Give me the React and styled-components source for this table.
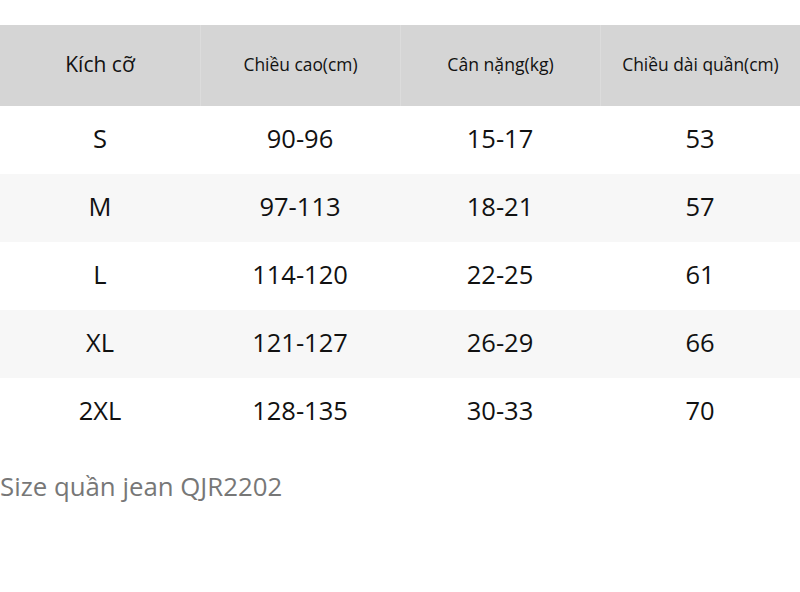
import styled, { createGlobalStyle } from 'styled-components';

const GlobalStyle = createGlobalStyle`
  body {
    margin: 0;
    background: #fff;
    font-family: 'Open Sans', 'Noto Sans', sans-serif;
    color: #111;
  }
`;

const rows = [
  ['S', '90-96', '15-17', '53'],
  ['M', '97-113', '18-21', '57'],
  ['L', '114-120', '22-25', '61'],
  ['XL', '121-127', '26-29', '66'],
  ['2XL', '128-135', '30-33', '70'],
];

const headers = [
  { label: 'Kích cỡ', size: 21 },
  { label: 'Chiều cao(cm)', size: 17.4 },
  { label: 'Cân nặng(kg)', size: 17.6 },
  { label: 'Chiều dài quần(cm)', size: 17.4 },
];

const Page = styled.div`
  padding-top: 25px;
  width: 800px;
`;

const Table = styled.div`
  display: grid;
  grid-template-columns: repeat(4, 200px);
`;

const HeadCell = styled.div`
  height: 81px;
  padding-bottom: 3px;
  box-sizing: border-box;
  display: flex;
  align-items: center;
  justify-content: center;
  background: #d5d5d5;
  font-size: ${(p) => p.$size}px;
  border-left: ${(p) => (p.$first ? 'none' : '1px solid #dcdcdc')};
`;

const Cell = styled.div`
  height: 68px;
  padding-bottom: 4px;
  box-sizing: border-box;
  display: flex;
  align-items: center;
  justify-content: center;
  font-size: 25.5px;
  background: ${(p) => (p.$alt ? '#f7f7f7' : '#fff')};
`;

const Caption = styled.p`
  margin: 22px 0 0;
  font-size: 25.8px;
  color: #777;
`;

export default function App() {
  return (
    <Page>
      <GlobalStyle />
      <Table>
        {headers.map((h, i) => (
          <HeadCell key={h.label} $size={h.size} $first={i === 0}>
            {h.label}
          </HeadCell>
        ))}
        {rows.map((r, ri) =>
          r.map((v, ci) => (
            <Cell key={ri + '-' + ci} $alt={ri % 2 === 1}>
              {v}
            </Cell>
          ))
        )}
      </Table>
      <Caption>Size quần jean QJR2202</Caption>
    </Page>
  );
}
